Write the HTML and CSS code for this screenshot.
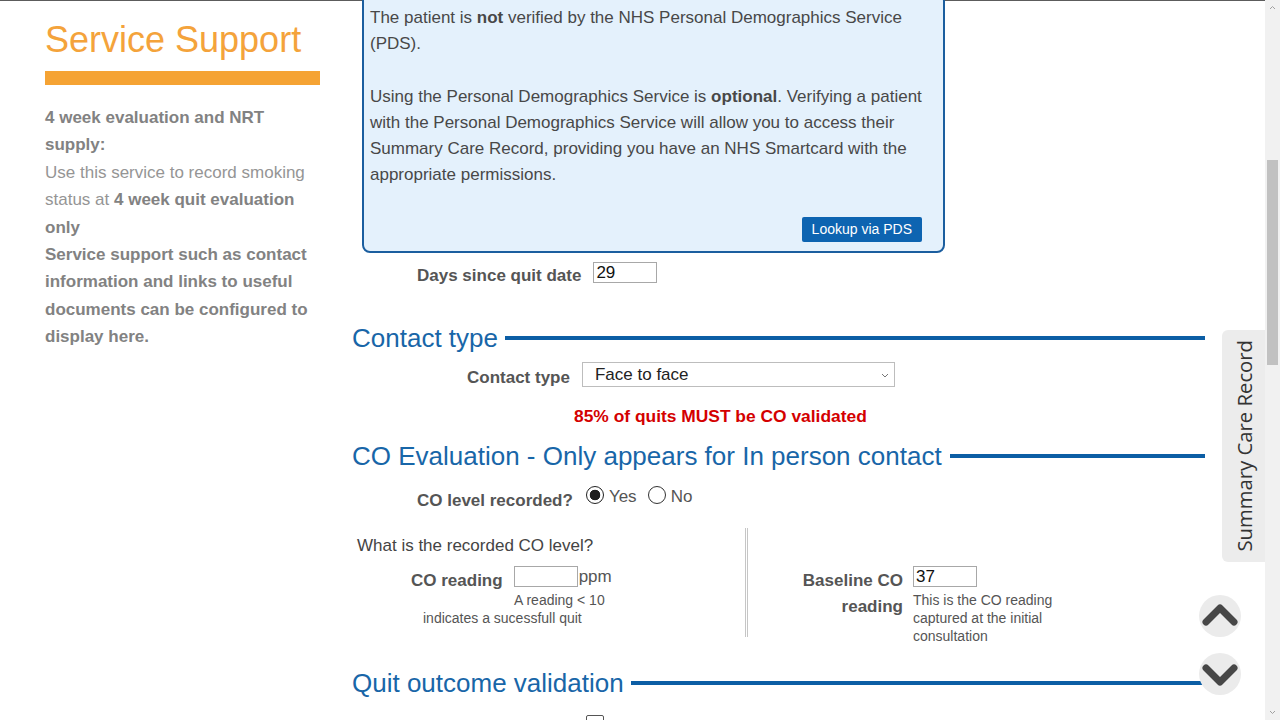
FILE: index.html
```html
<!DOCTYPE html>
<html lang="en">
<head>
<meta charset="utf-8">
<title>Service Support</title>
<link rel="stylesheet" href="styles.css">
</head>
<body>
<div class="app">
  <div class="page">
    <aside class="sidebar">
      <h1 class="side-title">Service Support</h1>
      <div class="side-bar"></div>
      <div class="side-text">
        <p class="b">4 week evaluation and NRT supply:</p>
        <p>Use this service to record smoking status at <b>4 week quit evaluation only</b></p>
        <p class="b">Service support such as contact information and links to useful documents can be configured to display here.</p>
      </div>
    </aside>

    <main class="main">
      <div class="pds-box">
        <p>The patient is <b>not</b> verified by the NHS Personal Demographics Service (PDS).</p>
        <p>Using the Personal Demographics Service is <b>optional</b>. Verifying a patient with the Personal Demographics Service will allow you to access their Summary Care Record, providing you have an NHS Smartcard with the appropriate permissions.</p>
        <div class="pds-actions"><button class="btn-primary" type="button">Lookup via PDS</button></div>
      </div>

      <div class="row row-days">
        <label class="lbl">Days since quit date</label>
        <input class="txt" type="text" value="29">
      </div>

      <h2 class="section-head sh-contact">Contact type</h2>
      <div class="row row-contact">
        <label class="lbl lbl-sel">Contact type</label>
        <div class="select">
          <span>Face to face</span>
          <svg class="sel-arrow" width="8" height="5" viewBox="0 0 8 5"><path d="M1 1l3 3 3-3" fill="none" stroke="#777" stroke-width="1"/></svg>
        </div>
      </div>
      <div class="warn">85% of quits MUST be CO validated</div>

      <h2 class="section-head sh-co">CO Evaluation - Only appears for In person contact</h2>
      <div class="row row-co">
        <label class="lbl">CO level recorded?</label>
        <div class="radios">
          <span class="radio checked"></span><span class="rtxt">Yes</span>
          <span class="radio"></span><span class="rtxt">No</span>
        </div>
      </div>

      <div class="cols">
        <div class="col-left">
          <div class="question">What is the recorded CO level?</div>
          <div class="row row-reading">
            <label class="lbl">CO reading</label>
            <input class="txt" type="text" value="">
            <span class="unit">ppm</span>
          </div>
          <div class="help help-1">A reading &lt; 10</div>
          <div class="help help-2">indicates a sucessfull quit</div>
        </div>
        <div class="divider"></div>
        <div class="col-right">
          <div class="row row-baseline">
            <label class="lbl lbl-base">Baseline CO reading</label>
            <div class="base-field">
              <input class="txt" type="text" value="37">
              <div class="help base-help">This is the CO reading captured at the initial consultation</div>
            </div>
          </div>
        </div>
      </div>

      <h2 class="section-head sh-quit">Quit outcome validation</h2>
      <div class="row row-check"><span class="checkbox"></span></div>
    </main>

    <div class="rail"></div>
  </div>

  <div class="scrollbar">
    <svg class="sb-arrow" width="15" height="15" viewBox="0 0 15 15"><path d="M5 9l2.5-2.5L10 9" fill="none" stroke="#a0a0a0" stroke-width="1"/></svg>
    <div class="sb-track"><div class="sb-thumb"></div></div>
    <svg class="sb-arrow" width="15" height="15" viewBox="0 0 15 15"><path d="M5 6l2.5 2.5L10 6" fill="none" stroke="#a0a0a0" stroke-width="1"/></svg>
  </div>

  <div class="scr-tab"><span>Summary Care Record</span></div>
  <button class="nav nav-up" type="button" aria-label="Scroll up">
    <svg width="36" height="24" viewBox="0 0 36 24"><path d="M4 19L18 5l14 14" fill="none" stroke="#474747" stroke-width="7" stroke-linecap="round" stroke-linejoin="round"/></svg>
  </button>
  <button class="nav nav-down" type="button" aria-label="Scroll down">
    <svg width="36" height="24" viewBox="0 0 36 24"><path d="M4 5l14 14L32 5" fill="none" stroke="#474747" stroke-width="7" stroke-linecap="round" stroke-linejoin="round"/></svg>
  </button>
</div>
</body>
</html>
```

FILE: styles.css
```css
* { box-sizing: border-box; }
html, body { margin: 0; padding: 0; }
body {
  font-family: "Liberation Sans", Arial, sans-serif;
  background: #fff;
  color: #444;
  overflow: hidden;
}
.app {
  position: relative;
  display: flex;
  width: 1280px;
  height: 720px;
  overflow: hidden;
}
.page {
  flex: 1;
  display: flex;
  align-items: flex-start;
  border-top: 1px solid #5c5c5c;
  height: 720px;
}

/* sidebar */
.sidebar {
  width: 352px;
  flex: none;
  padding-left: 45px;
  padding-right: 32px;
}
.side-title {
  margin: 19px 0 0;
  font-size: 36px;
  line-height: 40px;
  font-weight: normal;
  color: #f4a33b;
}
.side-bar {
  margin-top: 11px;
  height: 14px;
  background: #f5a334;
}
.side-text {
  margin-top: 19px;
  font-size: 17px;
  line-height: 27.4px;
  color: #959595;
}
.side-text p { margin: 0; }
.side-text .b, .side-text b { font-weight: bold; color: #828282; }

/* main */
.main {
  flex: none;
  width: 853px;
}
.pds-box {
  margin: -8px 0 0 10px;
  width: 583px;
  border: 2px solid #1b5e9f;
  border-radius: 8px;
  background: #e4f1fc;
  padding: 10px 12px 9px 6px;
}
.pds-box p {
  margin: 0;
  font-size: 17px;
  line-height: 26px;
  color: #484848;
}
.pds-box p + p { margin-top: 27px; }
.pds-actions {
  margin-top: 29px;
  display: flex;
  justify-content: flex-end;
  padding-right: 9px;
}
.btn-primary {
  height: 25px;
  padding: 0 10px;
  border: none;
  border-radius: 2px;
  background: #0d64b1;
  color: #fff;
  font-family: "Liberation Sans", Arial, sans-serif;
  font-size: 14px;
  line-height: 25px;
}

.row { display: flex; align-items: flex-start; }
.lbl {
  font-size: 17px;
  line-height: 20px;
  font-weight: bold;
  color: #555;
  padding-top: 4px;
}
.txt {
  width: 64px;
  height: 21px;
  border: 1px solid #a8a8a8;
  padding: 0 2px;
  margin: 0;
  font-family: "Liberation Sans", Arial, sans-serif;
  font-size: 17px;
  line-height: 19px;
  color: #111;
  background: #fff;
}
.row-days { margin: 9px 0 0 65px; gap: 12px; }

.section-head {
  display: flex;
  align-items: center;
  margin: 0;
  font-size: 26px;
  line-height: 30px;
  font-weight: normal;
  color: #1866a8;
  white-space: nowrap;
}
.section-head::after {
  content: "";
  flex: 1;
  height: 4px;
  margin-left: 7px;
  background: #0c5ea5;
}
.sh-contact { margin-top: 37px; }
.sh-co { margin-top: 15px; }
.sh-co::after { margin-left: 8px; }
.sh-quit { margin-top: 23px; }

.row-contact { margin: 9px 0 0 115px; gap: 12px; }
.lbl-sel { padding-top: 6px; }
.select {
  position: relative;
  width: 313px;
  height: 25px;
  border: 1px solid #bdbdbd;
  padding-left: 12px;
  font-size: 17px;
  line-height: 23px;
  color: #222;
}
.sel-arrow { position: absolute; right: 5px; top: 10px; }

.warn {
  margin-top: 18px;
  padding-left: 222px;
  font-size: 17.4px;
  line-height: 20px;
  font-weight: bold;
  color: #d40000;
}

.row-co { margin: 15px 0 0 65px; gap: 13px; }
.row-co .lbl { padding-top: 5px; }
.radios { display: flex; align-items: center; height: 17px; }
.radio {
  width: 18px;
  height: 18px;
  border: 1px solid #333;
  border-radius: 50%;
  background: #fff;
}
.radio.checked {
  border: 1.5px solid #222;
  background: radial-gradient(circle, #1e1e1e 0 5px, #fff 5.6px);
}
.rtxt {
  margin: 4px 11px 0 5px;
  font-size: 17px;
  line-height: 17px;
  color: #555;
}

.cols { display: flex; margin-top: 17px; }
.col-left { width: 393px; padding-top: 8px; }
.question {
  padding-left: 5px;
  font-size: 17px;
  line-height: 20px;
  color: #444;
}
.row-reading { margin: 10px 0 0 59px; gap: 11px; }
.row-reading .lbl { padding-top: 5px; }
.unit {
  margin-left: -10px;
  font-size: 17px;
  line-height: 21px;
  color: #555;
}
.help {
  font-size: 14px;
  line-height: 18px;
  color: #555;
}
.help-1 { margin-top: 0; padding-left: 162px; }
.help-2 { padding-left: 71px; }
.divider {
  width: 3px;
  height: 109px;
  border-left: 1px solid #c6c6c6;
  border-right: 1px solid #c6c6c6;
}
.col-right { flex: 1; }
.row-baseline { margin: 38px 0 0 25px; gap: 10px; }
.lbl-base {
  width: 130px;
  text-align: right;
  line-height: 26px;
  padding-top: 2px;
}
.base-help { margin-top: 4px; width: 160px; }

.row-check { margin: 17px 0 0 234px; }
.checkbox {
  width: 18px;
  height: 18px;
  border: 1px solid #555;
  border-radius: 2px;
}

.rail { flex: 1; }

/* scrollbar */
.scrollbar {
  width: 15px;
  flex: none;
  display: flex;
  flex-direction: column;
  background: #f1f1f1;
}
.sb-arrow { display: block; flex: none; }
.sb-track { flex: 1; padding: 145px 2px 0; }
.sb-thumb { height: 205px; background: #c1c1c1; }

/* floating widgets */
.scr-tab {
  position: absolute;
  left: 1222px;
  top: 330px;
  width: 43px;
  height: 232px;
  background: #ececec;
  border-radius: 6px 0 0 6px;
  display: flex;
  align-items: center;
  justify-content: center;
}
.scr-tab span {
  writing-mode: vertical-rl;
  transform: rotate(180deg);
  font-family: "Open Sans", "Liberation Sans", sans-serif;
  font-size: 20.3px;
  color: #333;
  white-space: nowrap;
}
.nav {
  position: absolute;
  left: 1199px;
  width: 42px;
  height: 42px;
  padding: 0;
  border: none;
  border-radius: 50%;
  background: #ebebeb;
  display: flex;
  align-items: center;
  justify-content: center;
}
.nav-up { top: 595px; }
.nav-up svg { margin-top: -2px; }
.nav-down { top: 653px; }
.nav-down svg { margin-top: 2px; }
```
